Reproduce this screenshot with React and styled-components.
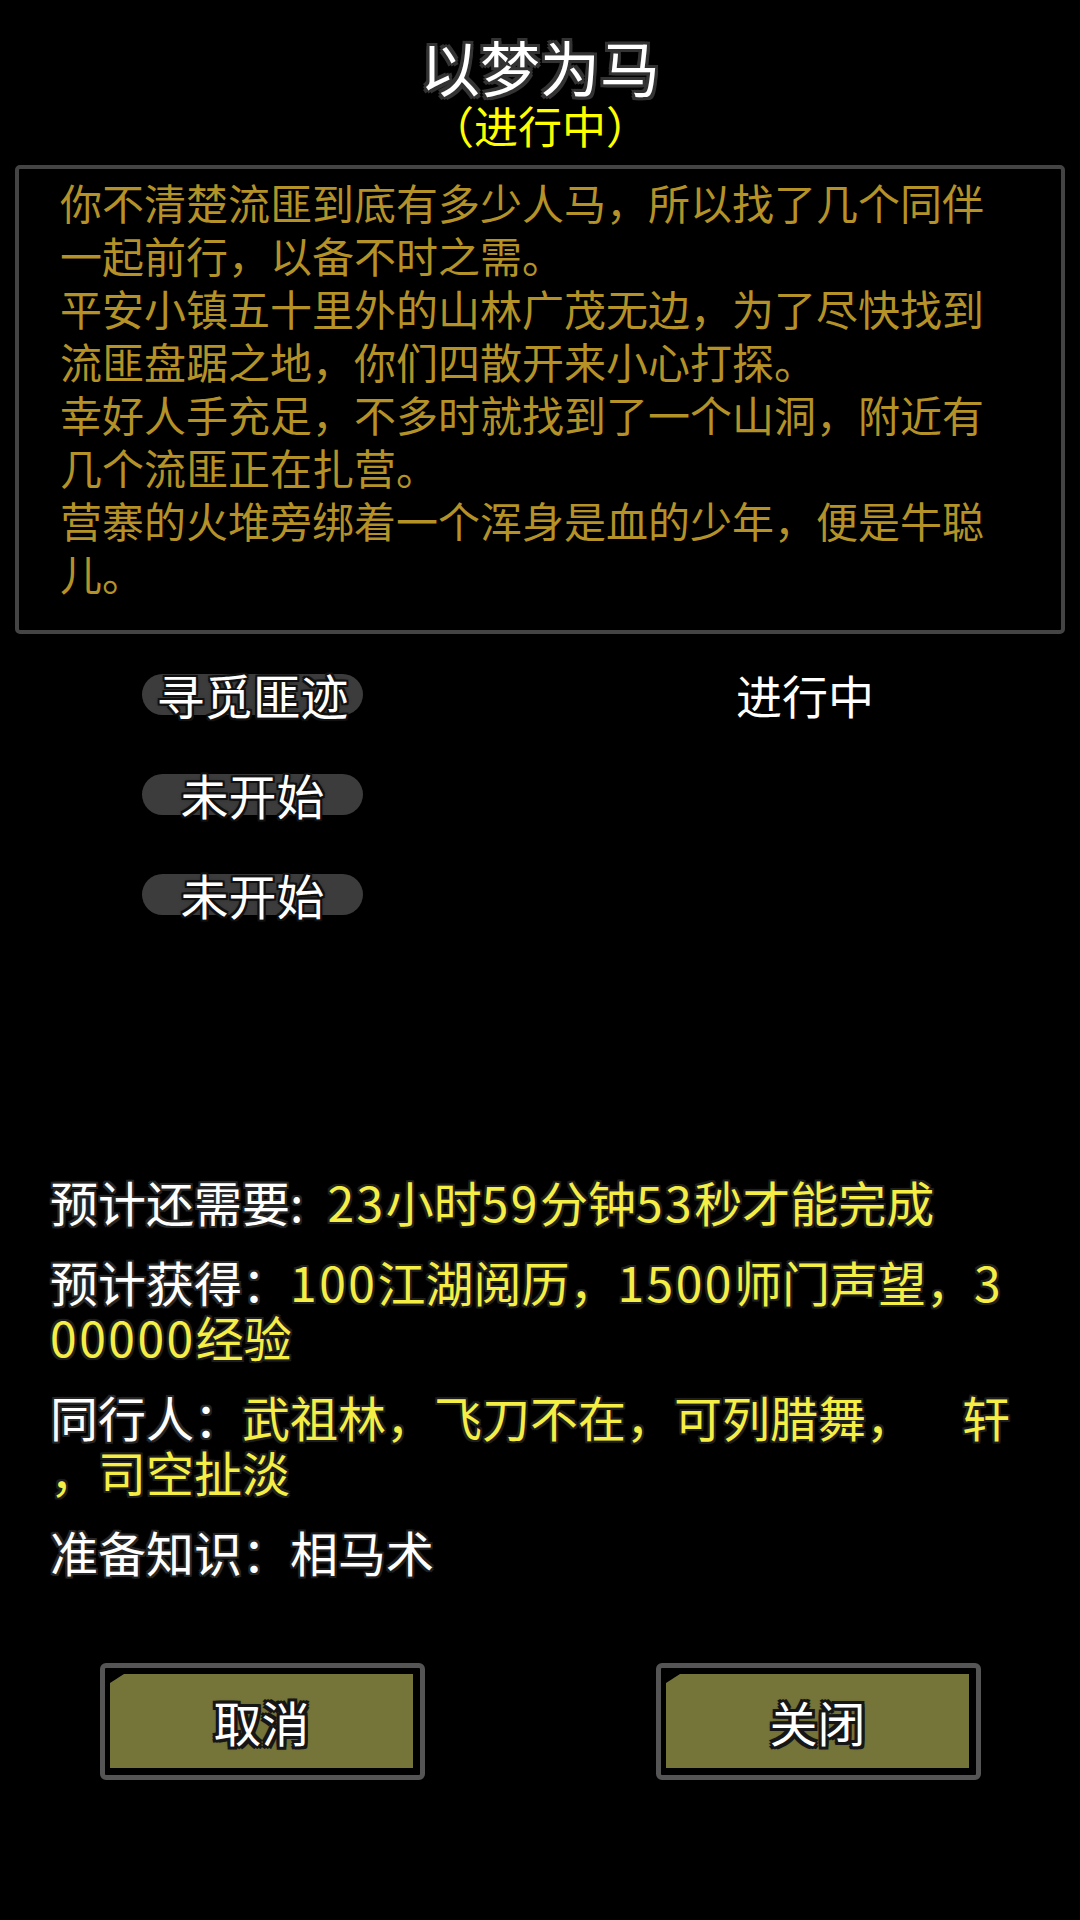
import React from "react";
import styled, { createGlobalStyle, css } from "styled-components";

const GlobalStyle = createGlobalStyle`
  html, body {
    margin: 0;
    padding: 0;
    background: #000;
  }
  body {
    font-family: "Noto Sans CJK SC", "Noto Sans", sans-serif;
    color: #fff;
    text-spacing-trim: space-all;
  }
`;

const outline = (c = "#262626", w = 2) => css`
  text-shadow:
    ${-w}px ${-w}px 0 ${c}, ${w}px ${-w}px 0 ${c},
    ${-w}px ${w}px 0 ${c}, ${w}px ${w}px 0 ${c},
    0 ${w}px 0 ${c}, 0 ${-w}px 0 ${c},
    ${w}px 0 0 ${c}, ${-w}px 0 0 ${c},
    0 0 4px ${c};
`;

const Page = styled.div`
  width: 1080px;
  height: 1920px;
  background: #000;
  display: flex;
  flex-direction: column;
  overflow: hidden;
`;

const Header = styled.header`
  padding-top: 31px;
  display: flex;
  flex-direction: column;
  align-items: center;
`;

const Title = styled.h1`
  margin: 0;
  font-size: 60px;
  font-weight: 400;
  line-height: 70px;
  color: #fff;
  ${outline("#333", 3)}
`;

const Status = styled.div`
  font-size: 44px;
  line-height: 48px;
  color: #ffff00;
`;

const StoryBox = styled.section`
  margin: 16px 15px 0;
  border: 4px solid #444;
  border-radius: 5px;
  padding: 6px 60px 30px 41px;
  height: 469px;
  box-sizing: border-box;
`;

const StoryLine = styled.p`
  margin: 0;
  font-size: 42px;
  line-height: 53px;
  color: #b49228;
`;

const Steps = styled.div`
  margin-top: 40px;
  display: flex;
  flex-direction: column;
  gap: 59px;
`;

const StepRow = styled.div`
  display: grid;
  grid-template-columns: 221px auto;
  column-gap: 373px;
  align-items: center;
  padding-left: 142px;
  height: 41px;
`;

const Pill = styled.div`
  height: 41px;
  border-radius: 21px;
  background: #3c3c3c;
  display: flex;
  align-items: center;
  justify-content: center;
  font-size: 48px;
  line-height: 41px;
  color: #fff;
  white-space: nowrap;
  ${outline("#111", 2)}
`;

const StepState = styled.span`
  font-size: 46px;
  line-height: 41px;
  color: #fff;
`;

const Info = styled.div`
  margin-top: 259px;
  padding-left: 50px;
  width: 968px;
  display: flex;
  flex-direction: column;
  gap: 25px;
`;

const InfoLine = styled.p`
  margin: 0;
  font-size: 48px;
  line-height: 55px;
  line-break: anywhere;
  word-break: break-all;
`;

const Label = styled.span`
  color: #fff;
  ${outline("#262626", 2)}
`;

const Value = styled.span`
  color: ${(p) => (p.$plain ? "#fff" : "#f5ee45")};
  ${outline("#1e1e1e", 2)}
`;

const Num = styled.span`
  letter-spacing: 2.5px;
`;

const Actions = styled.div`
  margin-top: 84px;
  display: flex;
  justify-content: space-between;
  padding: 0 99px 0 100px;
`;

const Button = styled.button`
  width: 325px;
  height: 117px;
  box-sizing: border-box;
  border: 5px solid #555;
  border-radius: 6px;
  background: #000;
  padding: 6px 7px 7px 5px;
  cursor: pointer;
  font-family: inherit;
`;

const ButtonFace = styled.span`
  display: flex;
  align-items: center;
  justify-content: center;
  width: 100%;
  height: 100%;
  background: #75753a;
  clip-path: polygon(14px 0, 100% 0, 100% 100%, 0 100%, 0 9px);
  font-size: 48px;
  font-weight: 400;
  color: #fff;
  ${outline("#161616", 3)}
`;

const story = [
  "你不清楚流匪到底有多少人马，所以找了几个同伴一起前行，以备不时之需。",
  "平安小镇五十里外的山林广茂无边，为了尽快找到流匪盘踞之地，你们四散开来小心打探。",
  "幸好人手充足，不多时就找到了一个山洞，附近有几个流匪正在扎营。",
  "营寨的火堆旁绑着一个浑身是血的少年，便是牛聪儿。",
];

const steps = [
  { name: "寻觅匪迹", state: "进行中" },
  { name: "未开始" },
  { name: "未开始" },
];

// digits in the game font run a bit wider than the CJK font's
const withNums = (text) =>
  text.split(/(\d+)/).map((part, i) =>
    /^\d+$/.test(part) ? <Num key={i}>{part}</Num> : part
  );

export default function App() {
  return (
    <Page>
      <GlobalStyle />
      <Header>
        <Title>以梦为马</Title>
        <Status>（进行中）</Status>
      </Header>

      <StoryBox>
        {story.map((t, i) => (
          <StoryLine key={i}>{t}</StoryLine>
        ))}
      </StoryBox>

      <Steps>
        {steps.map((s, i) => (
          <StepRow key={i}>
            <Pill>{s.name}</Pill>
            {s.state && <StepState>{s.state}</StepState>}
          </StepRow>
        ))}
      </Steps>

      <Info>
        <InfoLine>
          <Label>预计还需要:{"\u2002"}</Label>
          <Value>{withNums("23小时59分钟53秒才能完成")}</Value>
        </InfoLine>
        <InfoLine>
          <Label>预计获得：</Label>
          <Value>{withNums("100江湖阅历，1500师门声望，300000经验")}</Value>
        </InfoLine>
        <InfoLine>
          <Label>同行人：</Label>
          <Value>武祖林，飞刀不在，可列腊舞，　轩，司空扯淡</Value>
        </InfoLine>
        <InfoLine>
          <Label>准备知识：</Label>
          <Value $plain>相马术</Value>
        </InfoLine>
      </Info>

      <Actions>
        <Button>
          <ButtonFace>取消</ButtonFace>
        </Button>
        <Button>
          <ButtonFace>关闭</ButtonFace>
        </Button>
      </Actions>
    </Page>
  );
}
